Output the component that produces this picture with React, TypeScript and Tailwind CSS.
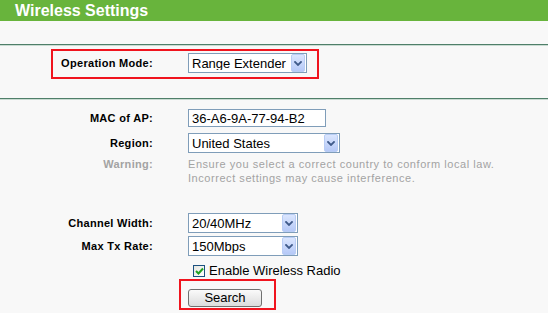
import type { ReactNode } from "react";

function Chevron() {
  return (
    <svg width="8" height="5" viewBox="0 0 8 5" className="block">
      <polyline
        points="1 1 4 4 7 1"
        fill="none"
        stroke="#3f5a8a"
        strokeWidth="1.8"
        strokeLinecap="square"
      />
    </svg>
  );
}

function Select({ value, width }: { value: string; width: string }) {
  return (
    <div
      className={`${width} h-[20px] flex items-center border border-[#7f9db9] bg-white`}
    >
      <span className="flex-1 pl-[3px] text-[13px] leading-none text-black whitespace-nowrap overflow-hidden">
        {value}
      </span>
      <div className="w-[14px] h-[18px] mr-px flex items-center justify-center rounded-[2px] border border-[#b9cdf5] bg-gradient-to-b from-[#dbe6fe] to-[#b6c9f7]">
        <Chevron />
      </div>
    </div>
  );
}

function Row({
  label,
  className,
  children,
}: {
  label?: string;
  className?: string;
  children: ReactNode;
}) {
  return (
    <div className={`flex items-center ${className ?? ""}`}>
      <span className="w-[153px] shrink-0 text-right text-[11px] font-bold tracking-[0.3px] text-black">
        {label}
      </span>
      <div className="ml-[35px]">{children}</div>
    </div>
  );
}

export default function App() {
  return (
    <div className="relative w-[548px] h-[313px] overflow-hidden bg-[#f8f8f8] font-['Liberation_Sans',Arial,sans-serif]">
      <div className="h-[21px] bg-[#68b43c] pl-[15px] text-[16px] leading-[21px] font-bold text-white">
        Wireless Settings
      </div>

      <div className="h-[23px]" />
      <div className="h-px bg-[#4f7f69]" />
      <div className="h-px bg-[#c9dbd2]" />

      <Row label="Operation Mode:" className="mt-[7px]">
        <Select value="Range Extender" width="w-[119px]" />
      </Row>

      <div className="mt-[25px] h-px bg-[#4f7f69]" />
      <div className="h-px bg-[#c9dbd2]" />

      <Row label="MAC of AP:" className="mt-[9px]">
        <div className="w-[138px] h-[18px] flex items-center border border-[#7f9db9] bg-white pl-[3px] text-[13px] leading-none text-black">
          36-A6-9A-77-94-B2
        </div>
      </Row>

      <Row label="Region:" className="mt-[6px]">
        <Select value="United States" width="w-[152px]" />
      </Row>

      <div className="flex items-start mt-[4px]">
        <span className="w-[153px] shrink-0 text-right text-[11px] leading-[14px] font-bold tracking-[0.3px] text-[#a3a3a3]">
          Warning:
        </span>
        <p className="ml-[35px] text-[11px] leading-[14px] text-[#a3a3a3] tracking-[0.55px]">
          Ensure you select a correct country to conform local law.
          <br />
          Incorrect settings may cause interference.
        </p>
      </div>

      <Row label="Channel Width:" className="mt-[28px]">
        <Select value="20/40MHz" width="w-[110px]" />
      </Row>

      <Row label="Max Tx Rate:" className="mt-[3px]">
        <Select value="150Mbps" width="w-[110px]" />
      </Row>

      <Row className="mt-[9px]">
        <label className="flex items-center gap-[4px] ml-[5px] text-[13px] leading-[12px] text-black">
          <span className="w-[12px] h-[12px] flex items-center justify-center border border-[#1c5180] bg-gradient-to-br from-[#e6e6e0] to-white">
            <svg width="9" height="8" viewBox="0 0 9 8">
              <polyline
                points="1 4 3.5 6.5 8 1.5"
                fill="none"
                stroke="#21a121"
                strokeWidth="2"
              />
            </svg>
          </span>
          Enable Wireless Radio
        </label>
      </Row>

      <Row className="mt-[8px]">
        <button className="w-[74px] h-[18px] rounded-[3px] border border-[#707070] bg-gradient-to-b from-[#fafafa] to-[#dcdcdc] text-[13px] leading-none text-black">
          Search
        </button>
      </Row>

      <div className="absolute left-[51px] top-[49px] w-[268px] h-[30px] border-2 border-[#f0141e]" />
      <div className="absolute left-[179px] top-[279px] w-[97px] h-[31px] border-2 border-[#f0141e]" />
    </div>
  );
}
